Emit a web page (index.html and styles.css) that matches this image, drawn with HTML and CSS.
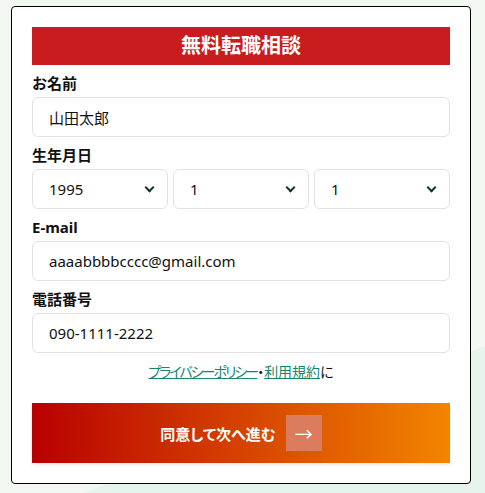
FILE: index.html
```html
<!DOCTYPE html>
<html lang="ja">
<head>
  <meta charset="UTF-8" />
  <meta name="viewport" content="width=device-width, initial-scale=1.0" />
  <title>無料転職相談</title>
  <link rel="stylesheet" href="styles.css">
</head>
<body>
  <div class="page">
    <form class="card">
      <h2 class="title">無料転職相談</h2>

      <label class="label" for="name">お名前</label>
      <input class="field" id="name" type="text" value="山田太郎">

      <div class="label">生年月日</div>
      <div class="birth">
        <div class="select-wrap">
          <select class="field select">
            <option>1995</option>
          </select>
        </div>
        <div class="select-wrap">
          <select class="field select">
            <option>1</option>
          </select>
        </div>
        <div class="select-wrap">
          <select class="field select">
            <option>1</option>
          </select>
        </div>
      </div>

      <label class="label" for="mail">E-mail</label>
      <input class="field" id="mail" type="email" value="aaaabbbbcccc@gmail.com">

      <label class="label" for="tel">電話番号</label>
      <input class="field" id="tel" type="tel" value="090-1111-2222">

      <p class="agree">
        <a class="policy" href="#">プライバシーポリシー</a>・<a href="#">利用規約</a>に
      </p>

      <button class="submit" type="button">
        同意して次へ進む
        <span class="arrow">→</span>
      </button>
    </form>
  </div>
</body>
</html>
```

FILE: styles.css
```css
* {
  box-sizing: border-box;
  margin: 0;
  padding: 0;
}

body {
  font-family: 'Noto Sans', 'Noto Sans CJK JP', sans-serif;
  color: #111;
  background: linear-gradient(160deg, #f3f8f3 78%, #e7f3ed 78%);
  min-height: 493px;
}

.page {
  padding: 6px 14px 10px 11px;
}

.card {
  width: 460px;
  background: #fff;
  border: 1px solid #000;
  border-radius: 4px;
  padding: 20px;
  display: flex;
  flex-direction: column;
}

.title {
  background-color: #c81c1e;
  color: #fff;
  font-size: 20px;
  font-weight: 700;
  text-align: center;
  height: 38px;
  line-height: 38px;
}

.label {
  display: block;
  font-size: 15px;
  font-weight: 700;
  line-height: 21px;
  margin: 8px 0 3px;
}

.field {
  width: 100%;
  height: 40px;
  border: 1px solid #e2e2e2;
  border-radius: 6px;
  padding: 0 16px;
  font-family: inherit;
  font-size: 15px;
  color: #111;
  background: #fff;
  outline: none;
}

.birth {
  display: grid;
  grid-template-columns: repeat(3, 1fr);
  gap: 5px;
}

.select-wrap {
  position: relative;
}

.select {
  appearance: none;
  -webkit-appearance: none;
}

.select-wrap::after {
  content: "";
  position: absolute;
  top: 15px;
  right: 15px;
  width: 5px;
  height: 5px;
  border-right: 2px solid #12352b;
  border-bottom: 2px solid #12352b;
  transform: rotate(45deg);
  pointer-events: none;
}

.agree {
  text-align: center;
  font-size: 14px;
  line-height: 20px;
  margin-top: 9px;
  font-feature-settings: "palt";
}

.agree a {
  color: #16866b;
}

.agree .policy {
  letter-spacing: -2px;
}

.submit {
  margin-top: 21px;
  height: 60px;
  border: none;
  background: linear-gradient(90deg, #b80000, #f28500);
  color: #fff;
  font-family: inherit;
  font-size: 15px;
  font-weight: 700;
  font-feature-settings: "palt";
  display: flex;
  align-items: center;
  justify-content: center;
  gap: 10px;
  box-shadow: 0 2px 4px rgba(0, 0, 0, 0.08);
  cursor: pointer;
}

.arrow {
  width: 36px;
  height: 36px;
  background: #dc7c5e;
  display: flex;
  align-items: center;
  justify-content: center;
  font-size: 18px;
  font-weight: 400;
}
```
